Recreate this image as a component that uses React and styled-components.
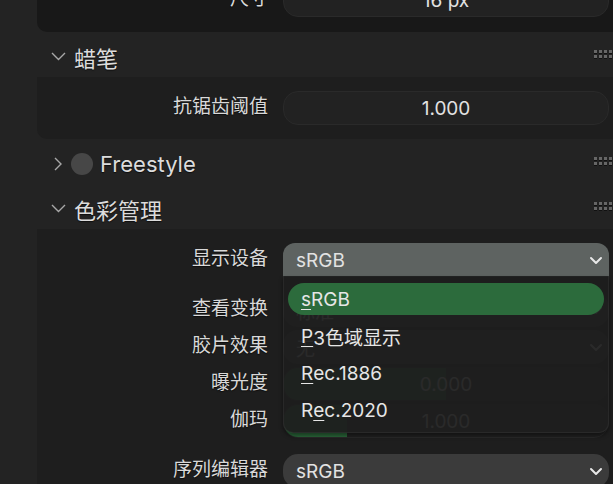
import React from "react";
import styled, { createGlobalStyle, css } from "styled-components";

const GlobalStyle = createGlobalStyle`
  html, body {
    margin: 0;
    height: 100%;
    overflow: hidden;
    background: #232323;
  }
  body {
    font-family: Inter, "Noto Sans CJK SC", sans-serif;
    -webkit-font-smoothing: antialiased;
  }
`;

const GREEN = "#2c6b3c";

const Viewport = styled.div`
  height: 484px;
  overflow: hidden;
`;

// the properties editor is scrolled a little, the first row is cut off
const Scroll = styled.div`
  margin-top: -31px;
  display: flex;
  flex-direction: column;
`;

const Body = styled.div`
  margin-left: 37px;
  background: ${p => p.tone || "#1e1e1e"};
  padding: 14px 4px ${p => (p.bottom != null ? p.bottom : 14)}px 0;
  border-bottom-left-radius: ${p => (p.square ? 0 : 10)}px;
  display: flex;
  flex-direction: column;
  gap: 16px;
`;

const Group = styled.div`
  display: flex;
  flex-direction: column;
  gap: 3px;
`;

const Header = styled.div`
  height: 45px;
  box-sizing: border-box;
  padding: 4px 1px 0 50px;
  display: flex;
  align-items: center;
  gap: 8px;
  color: #dcdcdc;
  font-size: 22px;
  text-shadow: 0 1px 1px rgba(0, 0, 0, 0.6);
`;

const Twisty = styled.span`
  width: 16px;
  display: flex;
  justify-content: center;
`;

const Dot = styled.span`
  width: 22px;
  height: 22px;
  border-radius: 50%;
  background: #474747;
  margin: 0 -1px 0 -3px;
`;

const Grip = styled.span`
  margin-left: auto;
  align-self: flex-start;
  margin-top: 14px;
  display: grid;
  grid-template-columns: repeat(4, 3px);
  gap: 2px;
  span {
    width: 3px;
    height: 3px;
    background: #666;
    box-shadow: 0 1px 0 #111;
  }
`;

const Row = styled.div`
  display: grid;
  grid-template-columns: 231px 1fr;
  column-gap: 15px;
  align-items: center;
  height: 34px;
`;

const Label = styled.span`
  text-align: right;
  font-size: 19px;
  line-height: 22px;
  margin-top: -2px;
  color: #d9d9d9;
  text-shadow: 0 1px 1px rgba(0, 0, 0, 0.6);
  white-space: nowrap;
`;

const Field = styled.div`
  position: relative;
  height: 34px;
  box-sizing: border-box;
  border-radius: 15px;
  display: flex;
  align-items: center;
  font-size: 19px;
  color: #e2e2e2;
  overflow: ${p => (p.open ? "visible" : "hidden")};
  ${p =>
    p.kind === "menu"
      ? css`
          background: ${p.open ? "#5e6361" : "#3b3b3b"};
          padding: 0 6px 0 13px;
          border-radius: ${p.open ? "12px 12px 0 0" : "15px"};
        `
      : css`
          background: #222222;
          border: 1px solid #2a2a2a;
          justify-content: center;
        `}
`;

const Fill = styled.span`
  position: absolute;
  left: 0;
  top: 0;
  bottom: 0;
  background: ${GREEN};
`;

const Value = styled.span`
  position: relative;
`;

const Arrow = styled.svg`
  margin-left: auto;
  flex: none;
`;

const Menu = styled.div`
  position: absolute;
  top: 33px;
  left: 0;
  right: 0;
  z-index: 2;
  box-sizing: border-box;
  padding: 7px 4px 6px;
  background: rgba(30, 30, 30, 0.94);
  border: 1px solid rgba(255, 255, 255, 0.05);
  border-top: none;
  border-radius: 0 0 10px 10px;
  box-shadow: 0 3px 4px rgba(0, 0, 0, 0.45);
  display: flex;
  flex-direction: column;
  gap: 5px;
`;

const Item = styled.div`
  height: 32px;
  border-radius: 16px;
  padding-left: 13px;
  display: flex;
  align-items: center;
  font-size: 19px;
  color: #e6e6e6;
  background: ${p => (p.active ? GREEN : "transparent")};
`;

const Key = styled.u`
  text-underline-offset: 3px;
  text-decoration-thickness: 1px;
`;

function Chevron({ open, color = "#a8a8a8" }) {
  return open ? (
    <svg width="15" height="9" viewBox="0 0 15 9">
      <polyline points="1,1 7.5,7.5 14,1" fill="none" stroke={color} strokeWidth="1.4" />
    </svg>
  ) : (
    <svg width="8" height="14" viewBox="0 0 8 14">
      <polyline points="1,1 7,7 1,13" fill="none" stroke={color} strokeWidth="1.4" />
    </svg>
  );
}

function DropArrow({ color = "#e8e8e8" }) {
  return (
    <Arrow width="14" height="9" viewBox="0 0 14 9">
      <polyline points="2,2 7,7 12,2" fill="none" stroke={color} strokeWidth="2" strokeLinejoin="round" strokeLinecap="round" />
    </Arrow>
  );
}

function PanelHeader({ title, open = true, dot }) {
  return (
    <Header>
      <Twisty>
        <Chevron open={open} />
      </Twisty>
      {dot && <Dot />}
      <span>{title}</span>
      <Grip>
        {Array.from({ length: 8 }).map((_, i) => (
          <span key={i} />
        ))}
      </Grip>
    </Header>
  );
}

function NumberRow({ label, value, fill }) {
  return (
    <Row>
      <Label>{label}</Label>
      <Field>
        {fill != null && <Fill style={{ width: fill }} />}
        <Value>{value}</Value>
      </Field>
    </Row>
  );
}

function MenuRow({ label, value, children }) {
  return (
    <Row>
      <Label>{label}</Label>
      <Field kind="menu" open={!!children}>
        <span>{value}</span>
        <DropArrow />
        {children}
      </Field>
    </Row>
  );
}

const displays = [
  { key: "s", rest: "RGB", active: true },
  { key: "P", rest: "3色域显示" },
  { key: "R", rest: "ec.1886" },
  { pre: "R", key: "e", rest: "c.2020" },
];

export default function App() {
  return (
    <Viewport>
      <GlobalStyle />
      <Scroll>
        <Body tone="#181818" bottom={15}>
          <NumberRow label="尺寸" value="16 px" />
        </Body>

        <PanelHeader title="蜡笔" />
        <Body>
          <NumberRow label="抗锯齿阈值" value="1.000" />
        </Body>

        <PanelHeader title="Freestyle" open={false} dot />
        <PanelHeader title="色彩管理" />
        <Body square>
          <Group>
            <MenuRow label="显示设备" value="sRGB">
              <Menu>
                {displays.map(d => (
                  <Item key={d.key + d.rest} active={d.active}>
                    {d.pre}
                    <Key>{d.key}</Key>
                    {d.rest}
                  </Item>
                ))}
              </Menu>
            </MenuRow>
          </Group>
          <Group>
            <MenuRow label="查看变换" value="标准" />
            <MenuRow label="胶片效果" value="无" />
            <NumberRow label="曝光度" value="0.000" fill="50%" />
            <NumberRow label="伽玛" value="1.000" fill="63px" />
          </Group>
          <Group>
            <MenuRow label="序列编辑器" value="sRGB" />
          </Group>
        </Body>
      </Scroll>
    </Viewport>
  );
}
